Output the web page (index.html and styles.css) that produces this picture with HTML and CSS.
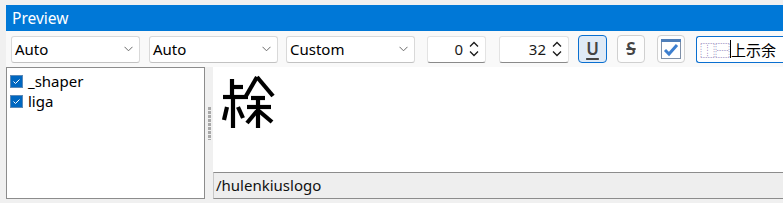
FILE: index.html
```html
<!DOCTYPE html>
<html>
<head>
<meta charset="utf-8">
<link rel="stylesheet" href="styles.css">
</head>
<body>
<div class="window">
  <div class="titlebar">
    <span class="title">Preview</span>
    <span class="grip"></span>
  </div>
  <div class="toolbar">
    <div class="combo c1"><span>Auto</span><svg class="chev" width="9" height="6" viewBox="0 0 9 6"><path d="M0.5 0.8 L4.5 4.8 L8.5 0.8" fill="none" stroke="#6a6a6a" stroke-width="1"/></svg></div>
    <div class="combo c2"><span>Auto</span><svg class="chev" width="9" height="6" viewBox="0 0 9 6"><path d="M0.5 0.8 L4.5 4.8 L8.5 0.8" fill="none" stroke="#6a6a6a" stroke-width="1"/></svg></div>
    <div class="combo c3"><span>Custom</span><svg class="chev" width="9" height="6" viewBox="0 0 9 6"><path d="M0.5 0.8 L4.5 4.8 L8.5 0.8" fill="none" stroke="#6a6a6a" stroke-width="1"/></svg></div>
    <div class="spin s1"><span class="num">0</span><svg class="arrows" width="10" height="16" viewBox="0 0 10 16"><path d="M1 5.5 L5 1.5 L9 5.5 M1 10.5 L5 14.5 L9 10.5" fill="none" stroke="#1a1a1a" stroke-width="1.3"/></svg></div>
    <div class="spin s2"><span class="num">32</span><svg class="arrows" width="10" height="16" viewBox="0 0 10 16"><path d="M1 5.5 L5 1.5 L9 5.5 M1 10.5 L5 14.5 L9 10.5" fill="none" stroke="#1a1a1a" stroke-width="1.3"/></svg></div>
    <div class="tbtn ubtn"><span class="u">U</span></div>
    <div class="tbtn sbtn"><span class="s">S</span></div>
    <div class="tbtn cbtn">
      <svg width="22" height="22" viewBox="0 0 22 22">
        <rect x="1.5" y="1.5" width="19" height="19" fill="#fff" stroke="#7d8fa8" stroke-width="1"/>
        <rect x="1" y="1" width="20" height="3" fill="#4f7fba"/>
        <path d="M5 12 L9 16 L17 7" fill="none" stroke="#3d7fcf" stroke-width="3"/>
      </svg>
    </div>
    <div class="field"><span class="ids">⿰⿱</span><span class="caret"></span><span class="cjk">上示余</span></div>
  </div>
  <div class="main">
    <div class="list">
      <div class="item"><span class="cb"><svg width="11" height="11" viewBox="0 0 11 11"><path d="M2.5 5.5 L4.5 7.5 L8.5 3.5" fill="none" stroke="#fff" stroke-width="1"/></svg></span><span>_shaper</span></div>
      <div class="item"><span class="cb"><svg width="11" height="11" viewBox="0 0 11 11"><path d="M2.5 5.5 L4.5 7.5 L8.5 3.5" fill="none" stroke="#fff" stroke-width="1"/></svg></span><span>liga</span></div>
    </div>
    <div class="splitter"><span class="dots"></span></div>
    <div class="right">
      <div class="canvas">
        <svg class="glyph" width="56" height="56" viewBox="0 0 56 56">
          <g fill="none" stroke="#000" stroke-width="4.2" stroke-linecap="butt">
            <path d="M12 4 V22"/>
            <path d="M12 12 H23"/>
            <path d="M3 22 H28"/>
            <path d="M13 24 V53"/>
            <path d="M7 32 L4 45"/>
            <path d="M18 32 L23 43"/>
            <path d="M37 2 L26 21"/>
            <path d="M37 2 L53 21"/>
            <path d="M31 23 H45"/>
            <path d="M27 32 H51"/>
            <path d="M38 23 V53"/>
            <path d="M37 36 L27 48"/>
            <path d="M39 36 L52 47"/>
          </g>
        </svg>
      </div>
      <div class="path">/hulenkiuslogo</div>
    </div>
  </div>
</div>
</body>
</html>
```

FILE: styles.css
```css
html, body {
  margin: 0;
  padding: 0;
}
body {
  background: #f0f0f0;
  width: 783px;
  height: 203px;
  overflow: hidden;
  font-family: "Noto Sans", "Liberation Sans", sans-serif;
  font-size: 15px;
  color: #000;
}
.window {
  padding-top: 5px;
  padding-left: 6px;
}
.titlebar {
  height: 26px;
  background: #0078d7;
  display: flex;
  align-items: center;
  color: #fff;
}
.title {
  margin-left: 6px;
  font-size: 15.5px;
  line-height: 26px;
}
.grip {
  flex: 1;
  height: 18px;
  margin-left: 10px;
  background-image: radial-gradient(circle, #2288dc 0.6px, transparent 0.7px);
  background-size: 2px 2px;
}
.toolbar {
  height: 36px;
  background: #f9f9f9;
  display: flex;
  align-items: center;
  padding-left: 5px;
}
.combo {
  box-sizing: border-box;
  width: 129px;
  height: 27px;
  background: #fff;
  border: 1px solid #d9d9d9;
  border-bottom-color: #c2c2c2;
  border-radius: 3px;
  display: flex;
  align-items: center;
  justify-content: space-between;
  padding: 0 6px 0 3px;
}
.c1 { margin-right: 9px; }
.c2 { margin-right: 8px; }
.c3 { margin-right: 12px; }
.spin {
  box-sizing: border-box;
  height: 27px;
  background: #fff;
  border: 1px solid #e3e3e3;
  border-bottom-color: #8a8a8a;
  border-radius: 3px;
  display: flex;
  align-items: center;
  justify-content: flex-end;
  padding-right: 6px;
}
.s1 { width: 59px; margin-right: 13px; }
.s2 { width: 70px; margin-right: 9px; }
.num { margin-right: 6px; color: #1a1a1a; }
.tbtn {
  box-sizing: border-box;
  height: 28px;
  border: 1px solid #d0d0d0;
  border-radius: 4px;
  background: #fdfdfd;
  display: flex;
  align-items: center;
  justify-content: center;
  margin-top: -1px;
}
.ubtn {
  width: 29px;
  margin-right: 10px;
  background: #dfeaf6;
  border-color: #0a6fd0;
}
.sbtn { width: 28px; margin-right: 12px; }
.cbtn { width: 28px; margin-right: 11px; }
.u {
  font-size: 17px;
  color: #444;
  text-decoration: underline;
  text-decoration-thickness: 2px;
  text-underline-offset: 3px;
  font-weight: 600;
}
.s {
  font-size: 17px;
  color: #444;
  text-decoration: line-through;
  text-decoration-thickness: 2px;
  font-weight: 600;
}
.field {
  box-sizing: border-box;
  flex: 1;
  height: 27px;
  background: #fff;
  border: 1px solid #0a6fd0;
  border-right: none;
  border-radius: 3px 0 0 3px;
  display: flex;
  align-items: center;
  padding-left: 3px;
  font-family: "Noto Sans CJK SC", "Noto Sans", sans-serif;
  font-size: 15px;
}
.ids { color: #5b4a9a; }
.caret {
  width: 1px;
  height: 18px;
  background: #000;
}
.main {
  display: flex;
  height: 132px;
}
.list {
  box-sizing: border-box;
  width: 199px;
  height: 132px;
  background: #fff;
  border: 1px solid #8c8c8c;
  padding: 3px 0 0 3px;
}
.item {
  display: flex;
  align-items: center;
  height: 20px;
  line-height: 20px;
}
.cb {
  box-sizing: border-box;
  width: 13px;
  height: 13px;
  background: #0067c0;
  border: 1px solid #5c8ab8;
  margin-right: 5px;
  display: flex;
  align-items: center;
  justify-content: center;
}
.splitter {
  width: 8px;
  display: flex;
  align-items: center;
  justify-content: center;
}
.dots {
  width: 3px;
  height: 33px;
  margin-top: -20px;
  background-image: linear-gradient(#a8a8a8 3px, transparent 3px);
  background-size: 3px 4px;
}
.right {
  flex: 1;
  display: flex;
  flex-direction: column;
}
.canvas {
  height: 105px;
  background: #fff;
  padding: 8px 0 0 7px;
  box-sizing: border-box;
}
.glyph { display: block; }
.path {
  box-sizing: border-box;
  height: 27px;
  background: #eeeeee;
  border-top: 1px solid #8c8c8c;
  border-bottom: 1px solid #8c8c8c;
  border-left: 1px solid #c8c8c8;
  padding-left: 2px;
  line-height: 25px;
  font-size: 15px;
  color: #111;
}
```
